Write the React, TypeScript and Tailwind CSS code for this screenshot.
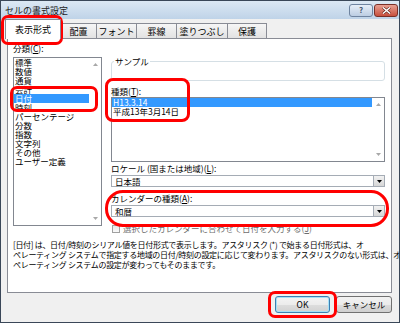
import React from "react";

const Up = () => (
  <svg width="5" height="3" viewBox="0 0 5 3"><path d="M0 3 L2.5 0 L5 3 Z" fill="#a8a8a8" /></svg>
);
const Down = () => (
  <svg width="5" height="3" viewBox="0 0 5 3"><path d="M0 0 L2.5 3 L5 0 Z" fill="#a8a8a8" /></svg>
);

const Combo = ({ value }: { value: string }) => (
  <div className="h-[12px] border border-[#a5acb5] bg-white flex items-center">
    <span className="flex-1 pl-[3px] text-[8.5px] leading-[10px]">{value}</span>
    <div className="w-[11px] h-[10px] mr-0 border-l border-[#a5acb5] bg-[linear-gradient(to_bottom,#f2f2f2,#d6d6d6)] flex items-center justify-center">
      <svg width="5" height="3" viewBox="0 0 5 3"><path d="M0 0 L2.5 3 L5 0 Z" fill="#000" /></svg>
    </div>
  </div>
);

export default function App() {
  const cats = ["標準", "数値", "通貨", "会計", "日付", "時刻", "パーセンテージ", "分数", "指数", "文字列", "その他", "ユーザー定義"];
  const tabs: [string, string][] = [
    ["配置", "w-[36px]"],
    ["フォント", "w-[40px]"],
    ["罫線", "w-[40px]"],
    ["塗りつぶし", "w-[51px]"],
    ["保護", "w-[39px]"],
  ];
  return (
    <div className="w-[400px] h-[323px] relative overflow-hidden bg-[#f0f0f0] border border-[#3a4758] font-['Noto_Sans_CJK_JP','Noto_Sans',sans-serif] text-black">
      {/* title bar */}
      <div className="h-[18px] flex items-center justify-between bg-[linear-gradient(to_bottom,#dce8f4,#bfd3e8)] pl-[4px] pr-[1px]">
        <span className="text-[9px] leading-none text-[#1e1e1e]">セルの書式設定</span>
        <div className="flex items-center gap-[1px]">
          <div className="w-[24px] h-[13px] rounded-[3px] border border-[#6f84a0] bg-[linear-gradient(to_bottom,#e6eef8,#bccde2)] flex items-center justify-center text-[8px] leading-none font-bold text-[#4a5a70]">?</div>
          <div className="w-[24px] h-[13px] rounded-[3px] border border-[#7a3028] bg-[linear-gradient(to_bottom,#e8a093,#c8503e)] flex items-center justify-center">
            <svg width="9" height="7" viewBox="0 0 9 7">
              <path d="M1 0.5 L8 6.5 M8 0.5 L1 6.5" stroke="#5a1c14" strokeWidth="2.6" />
              <path d="M1 0.5 L8 6.5 M8 0.5 L1 6.5" stroke="#fff" strokeWidth="1.5" />
            </svg>
          </div>
        </div>
      </div>

      <div className="px-[6px]">
        {/* tabs */}
        <div className="h-[19px] flex items-end">
          <div className="relative z-10 -ml-[2px] mb-[-1px] w-[56px] h-[20px] bg-white border border-[#898c95] border-b-0 flex items-center justify-center text-[9px] leading-none">表示形式</div>
          {tabs.map(([t, w]) => (
            <div key={t} className={`${w} h-[15px] border border-l-0 border-b-0 border-[#898c95] bg-[linear-gradient(to_bottom,#f6f6f6,#e2e2e2)] flex items-center justify-center text-[9px] leading-none`}>{t}</div>
          ))}
        </div>

        {/* panel */}
        <div className="w-[385px] h-[255px] border border-[#898c95] bg-white flex flex-col">
          <div className="flex h-[195px]">
            {/* left column */}
            <div className="pl-[5px] pt-[3px] flex flex-col">
              <div className="text-[8.5px] leading-[12px]">分類(<span className="underline">C</span>):</div>
              <div className="mt-[3px] w-[89px] h-[169px] border border-[#828790] flex">
                <div className="flex-1 flex flex-col">
                  {cats.map((c) => (
                    <div key={c} className={`h-[9px] text-[8.5px] leading-[9px] pl-[1px] whitespace-nowrap ${c === "日付" ? "bg-[#3399ff] text-white" : ""}`}>{c}</div>
                  ))}
                </div>
                <div className="w-[12px] flex flex-col items-center justify-between py-[5px]">
                  <Up />
                  <Down />
                </div>
              </div>
            </div>

            {/* right column */}
            <div className="ml-[9px] w-[274px] flex flex-col">
              <fieldset className="mt-[16px] h-[26px] border border-[#d5dfe5] rounded-[3px] px-[2px]">
                <legend className="px-[1px] text-[8.5px] leading-[12px]">サンプル</legend>
              </fieldset>
              <div className="mt-[5px] text-[8.5px] leading-[11px]">種類(<span className="underline">T</span>):</div>
              <div className="h-[65px] border border-[#828790] flex">
                <div className="flex-1 flex flex-col">
                  <div className="h-[9px] text-[8.5px] leading-[9px] pl-[1px] bg-[#3399ff] text-white">H13.3.14</div>
                  <div className="h-[9px] text-[8.5px] leading-[9px] pl-[1px]">平成13年3月14日</div>
                </div>
                <div className="w-[12px] flex flex-col items-center justify-between py-[5px]">
                  <Up />
                  <Down />
                </div>
              </div>
              <div className="mt-[1px] text-[8.5px] leading-[11px]">ロケール (国または地域)(<span className="underline">L</span>):</div>
              <div className="mt-[1px]"><Combo value="日本語" /></div>
              <div className="mt-[6px] text-[8.5px] leading-[11px]">カレンダーの種類(<span className="underline">A</span>):</div>
              <div className="mt-[1px]"><Combo value="和暦" /></div>
              <div className="mt-[6px] h-[11px] flex items-center pl-[1px]">
                <div className="w-[8px] h-[8px] border border-[#a0a0a0] bg-[linear-gradient(to_bottom,#e8e8e8,#fafafa)]"></div>
                <span className="ml-[3px] text-[8.5px] leading-[11px] text-[#6d6d6d] whitespace-nowrap">選択したカレンダーに合わせて日付を入力する(<span className="underline">J</span>)</span>
              </div>
            </div>
          </div>

          {/* description */}
          <div className="mt-[6px] pl-[5px] text-[8px] leading-[10px] tracking-[-0.3px] text-black">
            <div className="whitespace-nowrap">[日付] は、日付/時刻のシリアル値を日付形式で表示します。アスタリスク (*) で始まる日付形式は、オ</div>
            <div className="whitespace-nowrap">ペレーティング システムで指定する地域の日付/時刻の設定に応じて変わります。アスタリスクのない形式は、オ</div>
            <div className="whitespace-nowrap">ペレーティング システムの設定が変わってもそのままです。</div>
          </div>
        </div>

        {/* buttons */}
        <div className="mt-[3px] flex justify-end gap-[6px] pr-[1px]">
          <div className="w-[55px] h-[17px] rounded-[3px] border border-[#3c7fb1] shadow-[inset_0_0_0_1px_#a6e0f7] bg-[linear-gradient(to_bottom,#f4f4f4_0%,#ececec_50%,#dedede_50%,#d2d2d2_100%)] flex items-center justify-center text-[8.5px] leading-none">OK</div>
          <div className="w-[56px] h-[17px] rounded-[3px] border border-[#707070] bg-[linear-gradient(to_bottom,#f2f2f2_0%,#ebebeb_50%,#dddddd_50%,#cfcfcf_100%)] flex items-center justify-center text-[8.5px] leading-none">キャンセル</div>
        </div>
      </div>

      {/* red annotations */}
      <div className="absolute left-[0px] top-[14px] w-[62px] h-[30px] border-[3px] border-[#ff0000] rounded-[7px] pointer-events-none"></div>
      <div className="absolute left-[9px] top-[85px] w-[88px] h-[26px] border-[3px] border-[#ff0000] rounded-[7px] pointer-events-none"></div>
      <div className="absolute left-[104px] top-[77px] w-[85px] h-[44px] border-[3px] border-[#ff0000] rounded-[8px] pointer-events-none"></div>
      <div className="absolute left-[104px] top-[189px] w-[284px] h-[37px] border-[3px] border-[#ff0000] rounded-[18px] pointer-events-none"></div>
      <div className="absolute left-[267px] top-[290px] w-[69px] h-[27px] border-[3px] border-[#ff0000] rounded-[7px] pointer-events-none"></div>
    </div>
  );
}
